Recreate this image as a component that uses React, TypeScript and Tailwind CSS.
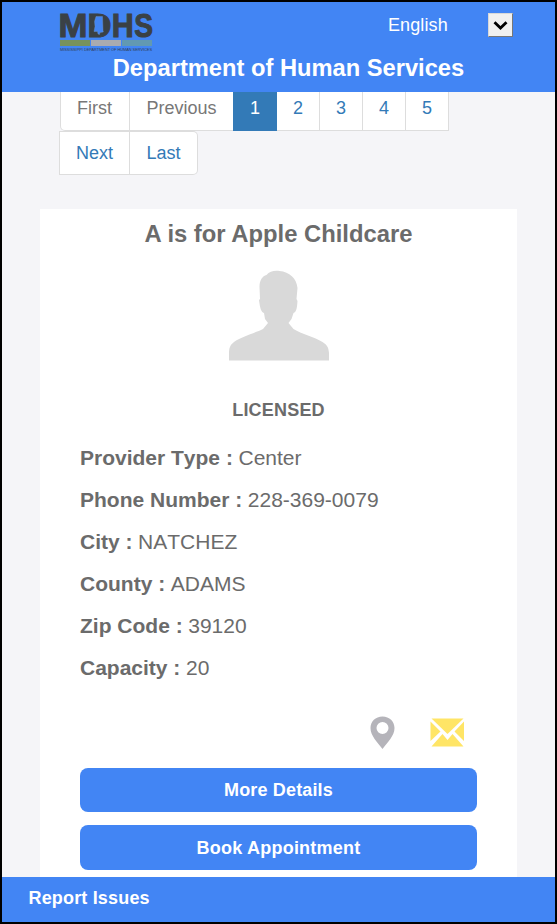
const details = [
  ["Provider Type :", "Center"],
  ["Phone Number :", "228-369-0079"],
  ["City :", "NATCHEZ"],
  ["County :", "ADAMS"],
  ["Zip Code :", "39120"],
  ["Capacity :", "20"],
];

function Logo() {
  return (
    <svg className="block h-[42px] w-[94px] overflow-visible" viewBox="0 0 94 42" fontFamily="'Liberation Sans', Arial, sans-serif">
      <g fontSize="33.500" fontWeight="bold" fill="#3a4145" stroke="#3a4145" strokeWidth="1">
        <text x="-1.500" y="24.500" textLength="29" lengthAdjust="spacingAndGlyphs">M</text>
        <text x="27.600" y="24.500" textLength="24" lengthAdjust="spacingAndGlyphs">D</text>
        <text x="51.800" y="24.500" textLength="22" lengthAdjust="spacingAndGlyphs">H</text>
        <text x="74.200" y="24.500" textLength="18.800" lengthAdjust="spacingAndGlyphs">S</text>
      </g>
      <path d="M33 4h9l5 4v10l-5 4h-9z" fill="#3a4145" />
      <path d="M36 4.500h6.500l.5 14 .3 1.500-3.300.5-.5 2-1.500-.5-.5-2.500h-3.500l1-5-.5-5z" fill="#4285f4" stroke="#6c94d0" strokeWidth=".4" />
      <path d="M0 28h30v6H0z" fill="#77925d" />
      <path d="M31 28h30v6H31z" fill="#a9abb0" />
      <path d="M62 28h30v6H62z" fill="#6299b2" />
      <text x="0" y="39" fontSize="4" fill="#303b50" textLength="92" lengthAdjust="spacingAndGlyphs">
        MISSISSIPPI DEPARTMENT OF HUMAN SERVICES
      </text>
    </svg>
  );
}

function Header() {
  return (
    <header className="h-[90px] shrink-0 bg-[#4285f4] text-white">
      <div className="flex h-[50px] pl-[58px] pt-[10px]">
        <Logo />
        <span className="ml-[234px] mt-[1px] w-[100px] text-[18px] leading-6 tracking-[0.1px]">English</span>
        <button aria-label="Choose language" className="mt-[1px] flex h-6 w-[25px] items-center justify-center border border-t-[#d8d8d8] border-l-[#d8d8d8] border-r-[#777] border-b-[#777] bg-[#f0f0f0]">
          <svg className="h-[11px] w-[15px]" viewBox="0 0 15 11">
            <path d="M1.500 2.200 7.500 8 13.500 2.200" fill="none" stroke="#000" strokeWidth="2.800" />
          </svg>
        </button>
      </div>
      <h1 className="pl-5 pt-[2px] text-center text-[23.7px] font-bold leading-7">Department of Human Services</h1>
    </header>
  );
}

function Pagination() {
  return (
    <nav className="ml-[57px] text-[18px] text-[#337ab7]">
      <div className="ml-px flex h-[39px] text-center leading-8">
        <span className="w-[70px] rounded-bl-[5px] border-x border-b border-[#ddd] bg-white pr-px text-[#777]">First</span>
        <span className="w-[103px] border-b border-[#ddd] bg-white text-[#777]">Previous</span>
        <span className="w-[44px] bg-[#337ab7] text-white">1</span>
        {["2", "3", "4", "5"].map((n) => (
          <span key={n} className="w-[43px] border-r border-b border-[#ddd] bg-white">{n}</span>
        ))}
      </div>
      <div className="flex h-[44px] text-center leading-[42px]">
        <span className="w-[71px] border border-[#ddd] bg-white">Next</span>
        <span className="w-[68px] rounded-r-[5px] border border-l-0 border-[#ddd] bg-white">Last</span>
      </div>
    </nav>
  );
}

function Person() {
  return (
    <svg className="mx-auto mt-5 block h-[91px] w-[102px]" viewBox="0 0 102 91">
      <path d="M1 90.500V84c0-6 1-9 5-12 7-5 21-9 29-13l5-6-3-4-1-6c-3-1-4-5-5-13l1-1-.5-12c0-7 3-11 7-12 3-4 8-4.500 13-4 10 1 17 7 18 17l-1 11 1 2c-.5 7-1 11-4 12l-2 6-3 4 5 6c8 5 21 8 29 13 5 3 6 6 6.500 11V90.500z" fill="#d9d9d9" />
    </svg>
  );
}

function ProviderCard() {
  return (
    <main className="ml-[38px] mt-[34px] w-[477px] grow bg-white px-10 text-[#6b6b6b]">
      <h2 className="pt-[9px] text-center text-[23.8px] font-bold leading-8">A is for Apple Childcare</h2>
      <Person />
      <p className="mt-[37px] text-center text-[18px] font-bold leading-6 tracking-[0.2px]">LICENSED</p>
      <dl className="mt-[15px] text-[21px] leading-[42px] [font-kerning:none]">
        {details.map(([label, value]) => (
          <div key={label} className="flex gap-[5.6px]">
            <dt className="font-bold">{label}</dt>
            <dd>{value}</dd>
          </div>
        ))}
      </dl>
      <div className="flex h-[79px] pl-[290px] pt-[27px]">
        <svg className="h-[33px] w-[25px]" viewBox="0 0 25 33">
          <path fillRule="evenodd" d="M12.500.5C5.500.5.500 5.500.500 12c0 8 7 14 12 21 5-7 12-13 12-21 0-6.500-5-11.500-12-11.500m0 5.500a6 6 0 1 1 0 12 6 6 0 0 1 0-12" fill="#b5b4ba" />
        </svg>
        <svg className="ml-[35px] mt-[2px] h-[29px] w-[35px]" viewBox="0 0 35 29">
          <path d="M1.500.5h32L17.500 16z" fill="#ffe566" />
          <path d="M.5 3.500 10.500 13.500.5 23zM34 3.500 24.500 13.500 34 23zM1.500 28.500 12.500 16l5 6 5-6 11 12.500z" fill="#ffe566" />
        </svg>
      </div>
      <button className="block h-[44px] w-full rounded-lg bg-[#4285f4] text-[18px] font-bold tracking-[0.15px] text-white">More Details</button>
      <button className="mt-[13px] block h-[45px] w-full rounded-lg bg-[#4285f4] pt-px text-[18px] font-bold tracking-[0.22px] text-white">Book Appointment</button>
    </main>
  );
}

export default function App() {
  return (
    <div className="flex h-[924px] w-[557px] flex-col overflow-hidden border-2 border-black bg-[#f5f5f8] font-['Liberation_Sans',Arial,sans-serif]">
      <Header />
      <Pagination />
      <ProviderCard />
      <footer className="h-[45px] shrink-0 bg-[#4285f4] pl-[26.5px] text-[18px] font-bold leading-[42px] tracking-[0.17px] text-white">Report Issues</footer>
    </div>
  );
}
